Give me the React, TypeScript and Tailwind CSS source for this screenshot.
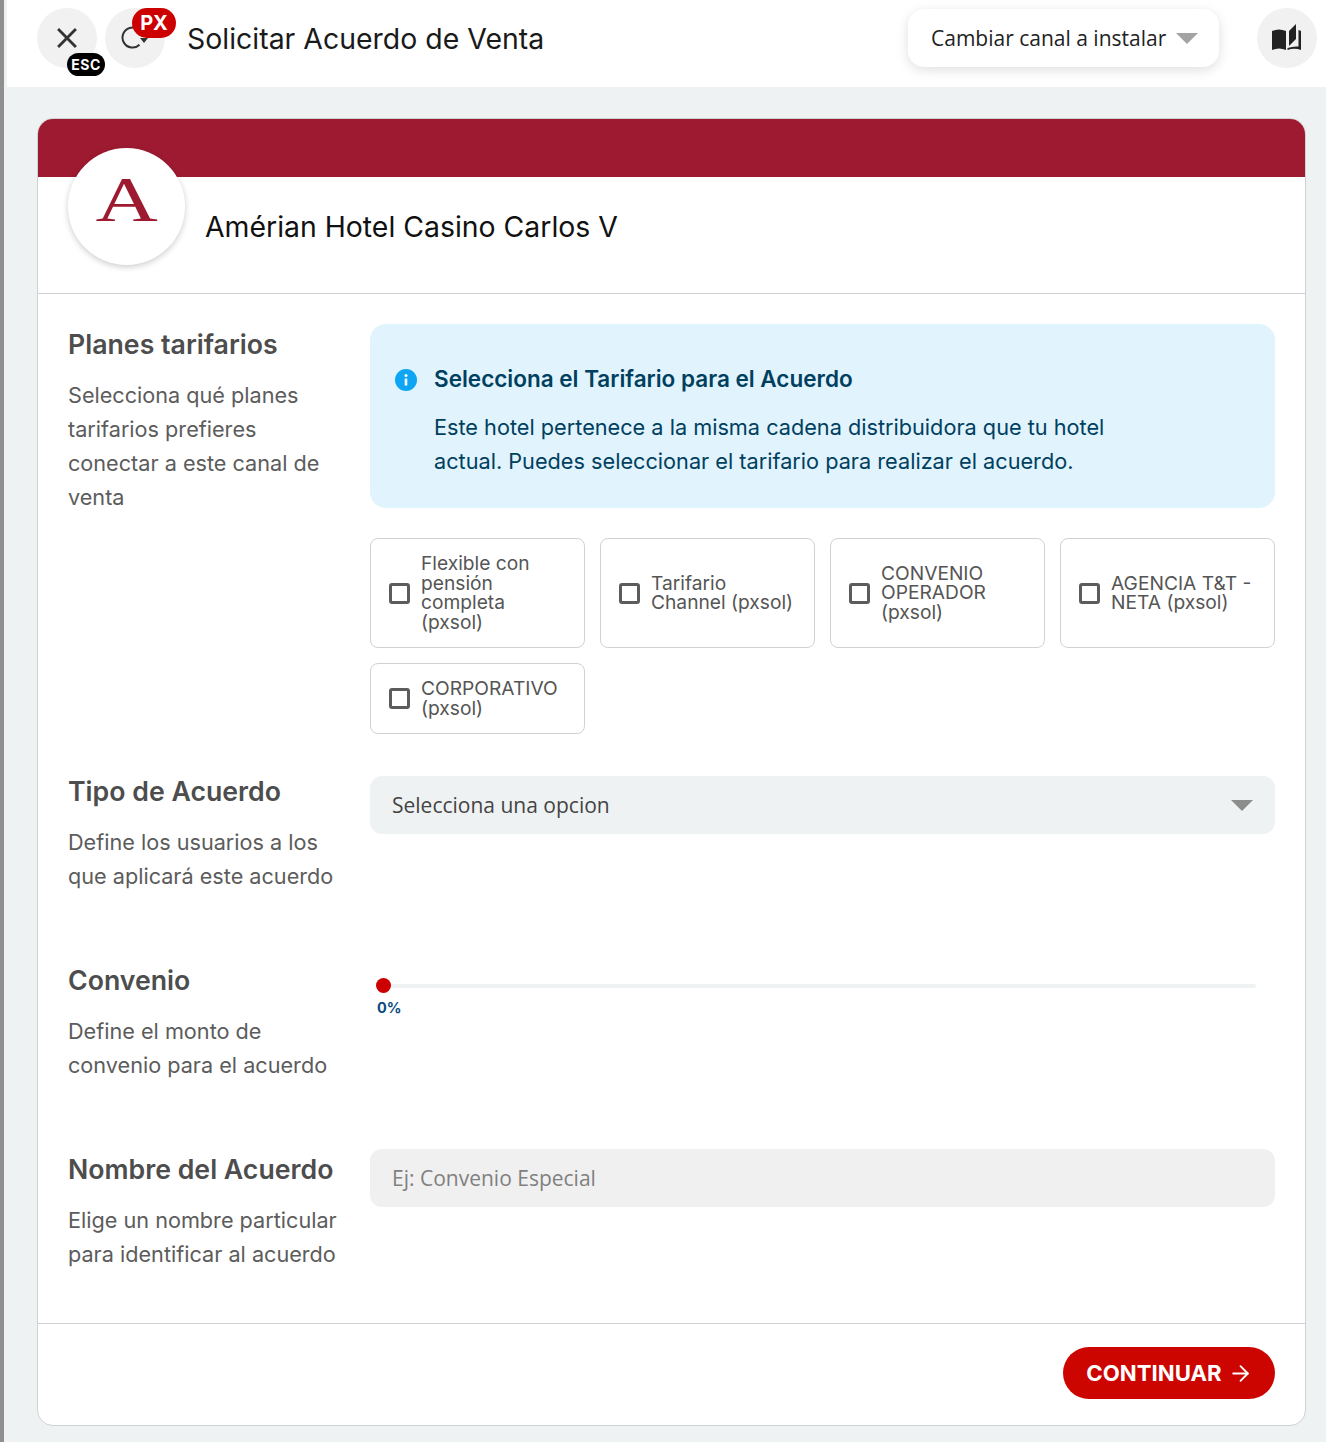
import React from 'react';
import { MdClose } from 'react-icons/md';
import { ArrowRight } from 'lucide-react';

const plans = [
    'Flexible con pensión completa (pxsol)',
    'Tarifario Channel (pxsol)',
    'CONVENIO OPERADOR (pxsol)',
    'AGENCIA T&T - NETA (pxsol)',
    'CORPORATIVO (pxsol)',
];

const Caret: React.FC<{ color: string }> = ({ color }) => (
    <svg width="22" height="11" viewBox="0 0 22 11" className="shrink-0">
        <polygon points="0,0 22,0 11,11" fill={color} />
    </svg>
);

const ReloadIcon = () => (
    <svg width="30" height="30" viewBox="0 0 30 30" fill="none">
        <path d="M22.5 14 A10 10 0 1 0 19.5 21.7" stroke="#333333" strokeWidth="2" />
        <polygon points="20,15 28,15 24,20" fill="#333333" />
    </svg>
);

const BookIcon = () => (
    <svg width="30" height="28" viewBox="0 0 30 28" fill="#222222">
        <path d="M0 7 Q7 4 14 7 V26 Q7 23 0 26 Z" />
        <path d="M17 7 L24 0 V15 L17 22 Z" />
        <path d="M26.5 6 Q28 6.3 29 7 V26 Q22.5 23.5 15.5 26 V24 Q21 22 26.5 22.5 Z" />
    </svg>
);

const SectionIntro: React.FC<{ title: string; lines: string }> = ({ title, lines }) => (
    <div className="w-[302px] shrink-0">
        <h2 className="text-[26.7px] leading-[40px] font-semibold text-[#4d4d4d] whitespace-nowrap">{title}</h2>
        <p className="mt-[14px] text-[21.65px] leading-[34px] text-[#5c5c5c] whitespace-pre-line">{lines}</p>
    </div>
);

const PlanCard: React.FC<{ label: string }> = ({ label }) => (
    <label className="flex items-center gap-[11px] px-[18px] py-[15px] border border-[#cfd2d3] rounded-[8px] bg-white">
        <span className="w-[21px] h-[21px] shrink-0 border-[3px] border-[#5c5c5c] rounded-[3px]" />
        <span className="text-[19.2px] leading-[19.5px] text-[#555555]">{label}</span>
    </label>
);

export default function App() {
    return (
        <div className="flex w-[1326px] h-[1442px] overflow-hidden bg-[#eef2f3] font-['Inter',sans-serif]">
            <div className="w-[4px] shrink-0 bg-[#8f8f8f]" />
            <div className="flex-1 min-w-0 pl-[3px]">
                <header className="flex items-start h-[87px] pt-[8px] bg-white pl-[30px] pr-[9px]">
                    <button className="relative flex items-center justify-center w-[60px] h-[60px] rounded-full bg-[#f1f1f1] text-[#333333]">
                        <MdClose size={34} />
                        <span className="absolute left-[30px] top-[45px] flex items-center justify-center w-[38px] h-[23px] rounded-full bg-black text-white text-[14px] font-bold tracking-[0.5px]">ESC</span>
                    </button>
                    <button className="relative flex items-center justify-center w-[60px] h-[60px] ml-[8px] rounded-full bg-[#f1f1f1]">
                        <ReloadIcon />
                        <span className="absolute left-[27px] top-0 flex items-center justify-center w-[44px] h-[30px] rounded-full bg-[#cc0000] text-white text-[20px] font-bold">PX</span>
                    </button>
                    <h1 className="ml-[22px] mt-[16px] text-[28.45px] leading-[30px] text-[#1a1a1a] whitespace-nowrap">Solicitar Acuerdo de Venta</h1>
                    <button className="ml-auto mt-[1px] flex items-center w-[311px] h-[58px] pl-[23px] rounded-[16px] bg-white shadow-[0_3px_12px_rgba(0,0,0,0.13)] font-['Open_Sans',sans-serif] text-[21px] text-[#222222] whitespace-nowrap">
                        <span className="mt-[1px]">Cambiar canal a instalar</span>
                        <span className="ml-[10px] flex"><Caret color="#a3a3a3" /></span>
                    </button>
                    <button className="flex items-center justify-center w-[60px] h-[60px] ml-[38px] rounded-full bg-[#f1f1f1]">
                        <BookIcon />
                    </button>
                </header>

                <main className="mt-[31px] ml-[30px] w-[1269px] h-[1308px] flex flex-col bg-white border border-[#cfd2d3] rounded-[16px] overflow-hidden">
                    <div className="h-[58px] shrink-0 bg-[#9e1a31]" />
                    <div className="flex h-[117px] shrink-0 pl-[30px] border-b border-[#cfd2d3]">
                        <div className="flex items-center justify-center w-[117px] h-[117px] -mt-[29px] shrink-0 rounded-full bg-white shadow-[0_2px_6px_rgba(0,0,0,0.2)] overflow-hidden">
                            <span className="-mt-[13px] font-['Liberation_Serif',serif] text-[63px] leading-none text-[#9e1a31] scale-x-[1.37]">A</span>
                        </div>
                        <div className="ml-[20px] mt-[30px] text-[28.4px] leading-[40px] text-[#111111] whitespace-nowrap">Amérian Hotel Casino Carlos V</div>
                    </div>

                    <div className="flex-1 px-[30px]">
                        <section className="flex pt-[30px] h-[477px]">
                            <SectionIntro title="Planes tarifarios" lines={'Selecciona qué planes\ntarifarios prefieres\nconectar a este canal de\nventa'} />
                            <div className="flex-1 min-w-0">
                                <div className="h-[184px] pl-[25px] pt-[38px] rounded-[16px] bg-[#e1f3fc] text-[#00405f]">
                                    <div className="flex items-center h-[34px]">
                                        <svg width="22" height="22" viewBox="0 0 22 22" className="shrink-0 mt-[2px]">
                                            <circle cx="11" cy="11" r="11" fill="#0ea5f5" />
                                            <rect x="9.7" y="9.5" width="2.6" height="7" rx="0.6" fill="#fff" />
                                            <circle cx="11" cy="6.6" r="1.5" fill="#fff" />
                                        </svg>
                                        <h3 className="ml-[17px] text-[22.5px] font-semibold whitespace-nowrap">Selecciona el Tarifario para el Acuerdo</h3>
                                    </div>
                                    <p className="mt-[14px] ml-[39px] text-[21.7px] leading-[34px] whitespace-pre-line">{'Este hotel pertenece a la misma cadena distribuidora que tu hotel\nactual. Puedes seleccionar el tarifario para realizar el acuerdo.'}</p>
                                </div>
                                <div className="grid grid-cols-4 gap-[15px] mt-[30px]">
                                    {plans.map((plan) => (
                                        <PlanCard key={plan} label={plan} />
                                    ))}
                                </div>
                            </div>
                        </section>

                        <section className="flex h-[189px]">
                            <SectionIntro title="Tipo de Acuerdo" lines={'Define los usuarios a los\nque aplicará este acuerdo'} />
                            <div className="flex-1 min-w-0 pt-[5px]">
                                <div className="flex items-center justify-between h-[58px] px-[22px] rounded-[12px] bg-[#eff2f3] font-['Open_Sans',sans-serif] text-[21px] text-[#444444]">
                                    <span className="mt-[2px]">Selecciona una opcion</span>
                                    <Caret color="#8c8c8c" />
                                </div>
                            </div>
                        </section>

                        <section className="flex h-[189px]">
                            <SectionIntro title="Convenio" lines={'Define el monto de\nconvenio para el acuerdo'} />
                            <div className="flex-1 min-w-0 pl-[7px] pr-[19px]">
                                <div className="relative h-[4px] mt-[24px] rounded-full bg-[#eff2f3]">
                                    <span className="absolute -left-px -top-[6px] w-[15px] h-[15px] rounded-full bg-[#cc0000]" />
                                </div>
                                <div className="mt-[10px] text-[14.5px] leading-[20px] font-bold text-[#0b4a80]">0%</div>
                            </div>
                        </section>

                        <section className="flex">
                            <SectionIntro title="Nombre del Acuerdo" lines={'Elige un nombre particular\npara identificar al acuerdo'} />
                            <div className="flex-1 min-w-0">
                                <div className="flex items-center h-[58px] pl-[22px] rounded-[12px] bg-[#f0f0f0] font-['Open_Sans',sans-serif] text-[21px] text-[#808080]">
                                    <span className="mt-[2px]">Ej: Convenio Especial</span>
                                </div>
                            </div>
                        </section>
                    </div>

                    <footer className="flex items-center justify-end h-[102px] shrink-0 pr-[30px] pb-[3px] border-t border-[#cfd2d3]">
                        <button className="flex items-center justify-center gap-[6px] w-[212px] h-[52px] pl-[1px] rounded-full bg-[#cc0500] text-white text-[22.2px] font-bold">
                            CONTINUAR
                            <ArrowRight size={25} strokeWidth={1.8} />
                        </button>
                    </footer>
                </main>
            </div>
        </div>
    );
}
